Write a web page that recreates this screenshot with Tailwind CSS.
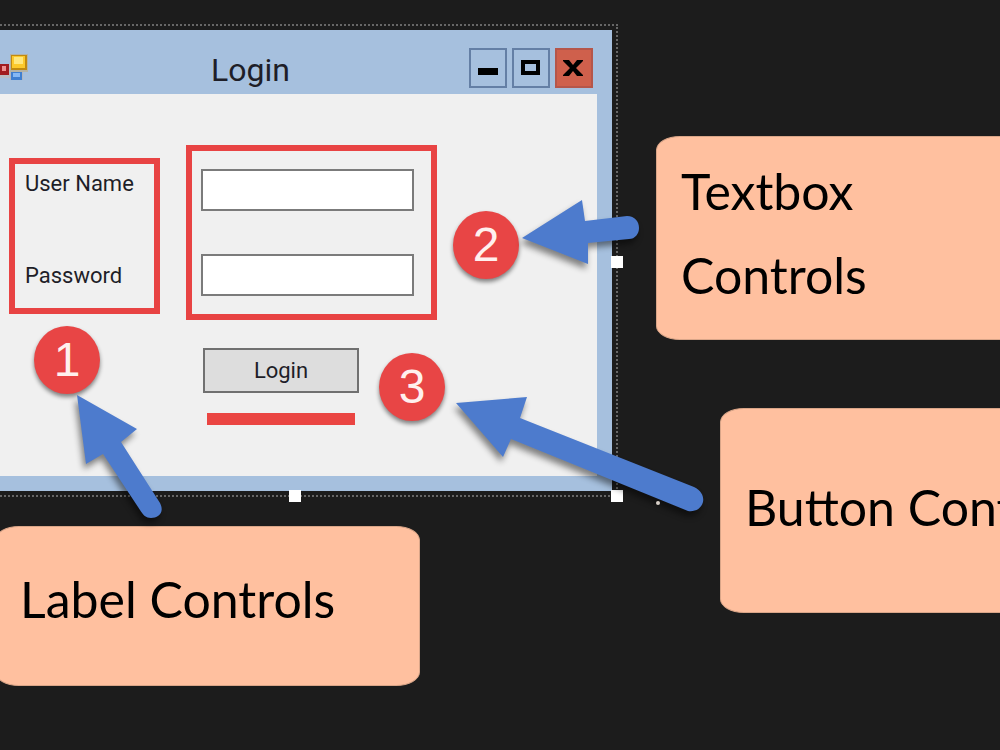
<!DOCTYPE html>
<html lang="en">
<head>
  <meta charset="UTF-8" />
  <meta name="viewport" content="width=device-width, initial-scale=1.0" />
  <title>Login form controls</title>
  <script src="https://cdn.jsdelivr.net/npm/@tailwindcss/browser@4"></script>
</head>
<body class="bg-[#1c1c1c]">
  <main class="relative min-h-screen overflow-hidden pt-6 font-['Roboto',sans-serif] text-[#1e1e28]">

    <!-- Form in the designer, with its dotted selection frame -->
    <section class="relative w-[618px] border-y-2 border-r-2 border-dotted border-[#666] py-1 pr-1">
      <div class="bg-[#a6c0de] pr-[15px] pb-[15px]">
        <header class="flex h-16 items-center pt-3">
          <svg class="mb-2 h-8 w-8 shrink-0" viewBox="0 0 32 32" aria-hidden="true">
            <rect x="-4" y="16" width="14" height="14" fill="#b9bdc4" />
            <rect x="10" y="6" width="18" height="18" fill="#b5b3a5" />
            <rect x="10" y="24" width="13" height="10" fill="#b3b6bd" />
            <rect x="-3" y="16" width="12" height="11" fill="#a11c20" />
            <rect x="2" y="18" width="4" height="5" fill="#ee8f8f" />
            <rect x="11" y="7" width="16" height="15" fill="#c18a10" />
            <rect x="12" y="8" width="13" height="12" fill="#fcc92b" />
            <rect x="14" y="9" width="9" height="7" fill="#ffe77d" />
            <rect x="11" y="24" width="11" height="8" fill="#3f7fd0" />
            <rect x="13" y="25" width="7" height="4" fill="#85b8f4" />
          </svg>
          <h1 class="flex-1 pt-1 text-center text-[32px] leading-10">Login</h1>
          <div class="mr-1 flex gap-[5px]">
            <button type="button" aria-label="Minimize" class="h-10 w-[38px] border-2 border-[#647fa5]">
              <svg class="h-full w-full" viewBox="0 0 34 36"><rect x="7" y="18" width="20" height="7" /></svg>
            </button>
            <button type="button" aria-label="Maximize" class="h-10 w-[38px] border-2 border-[#647fa5]">
              <svg class="h-full w-full" viewBox="0 0 34 36"><rect x="9" y="12" width="15" height="11" fill="none" stroke="#000" stroke-width="4" /></svg>
            </button>
            <button type="button" aria-label="Close" class="h-10 w-[38px] border-2 border-[#b5564a] bg-[#cf604c]">
              <svg class="h-full w-full" viewBox="0 0 34 36"><path d="M6 10h6l4 5 4-5h6v1l-7 7 7 7v1h-6l-4-5-4 5H6v-1l7-7-7-7z" /></svg>
            </button>
          </div>
        </header>

        <form class="h-[382px] bg-[#f0f0f0] pt-[51px] text-[22px] leading-8">
          <div class="flex items-start gap-[26px] pl-[9px]">
            <div class="mt-[13px] flex h-[156px] w-[151px] flex-col gap-[60px] border-6 border-[#e84343] pt-1 pl-[10px]">
              <label for="username" class="whitespace-nowrap">User Name</label>
              <label for="password">Password</label>
            </div>
            <div class="flex h-[175px] w-[251px] flex-col gap-[43px] border-6 border-[#e84343] pt-[18px] pl-[9px]">
              <input id="username" type="text" class="h-[42px] w-[213px] border-2 border-[#7b7b7b] bg-white px-2" />
              <input id="password" type="password" class="h-[42px] w-[213px] border-2 border-[#7b7b7b] bg-white px-2" />
            </div>
          </div>
          <div class="mt-7 ml-[203px] w-[156px]">
            <button type="submit" class="h-[45px] w-full border-2 border-[#707070] bg-[#dddddd]">Login</button>
            <div class="mx-auto mt-5 h-3 w-[148px] bg-[#ea4542]"></div>
          </div>
        </form>
      </div>

      <!-- Resize handles -->
      <span class="absolute -right-[7px] top-[230px] size-3 bg-white"></span>
      <span class="absolute -bottom-[7px] left-[289px] size-3 bg-white"></span>
      <span class="absolute -right-[7px] -bottom-[7px] size-3 bg-white"></span>
    </section>

    <!-- Callouts -->
    <div class="absolute top-[136px] left-[656px] h-[204px] w-[420px] rounded-[24px/14px] border border-[#d9a588] bg-[#ffc09f] pt-3 pl-6 font-['Lato',sans-serif] text-[50px] leading-[84px] text-black">
      <p class="w-[240px]">Textbox Controls</p>
    </div>
    <div class="absolute top-[408px] left-[720px] h-[205px] w-[420px] rounded-[24px/14px] border border-[#d9a588] bg-[#ffc09f] pt-14 pl-6 font-['Lato',sans-serif] text-[50px] leading-[84px] text-black">
      <p class="whitespace-nowrap">Button Controls</p>
    </div>
    <div class="absolute top-[526px] -left-[5px] h-[160px] w-[425px] rounded-[24px/14px] border border-[#d9a588] bg-[#ffc09f] pt-[30px] pl-6 font-['Lato',sans-serif] text-[50px] leading-[84px] text-black">
      <p class="whitespace-nowrap">Label Controls</p>
    </div>

    <!-- Numbers -->
    <span class="absolute top-[326px] left-[34px] flex h-[68px] w-[66px] items-center justify-center rounded-[50%] bg-[#e84545] font-['Liberation_Sans',sans-serif] text-5xl text-[#fff0ee] shadow-[0_3px_4px_#0007]">1</span>
    <span class="absolute top-[211px] left-[453px] flex h-[68px] w-[66px] items-center justify-center rounded-[50%] bg-[#e84545] font-['Liberation_Sans',sans-serif] text-5xl text-[#fff0ee] shadow-[0_3px_4px_#0007]">2</span>
    <span class="absolute top-[353px] left-[379px] flex h-[68px] w-[66px] items-center justify-center rounded-[50%] bg-[#e84545] font-['Liberation_Sans',sans-serif] text-5xl text-[#fff0ee] shadow-[0_3px_4px_#0007]">3</span>

    <!-- Arrows -->
    <svg class="pointer-events-none absolute top-0 left-0 h-[750px] w-[1000px] drop-shadow-[-2px_5px_3px_#0007]" viewBox="0 0 1000 750" fill="#4d7bcd" aria-hidden="true">
      <path d="M77 395L137 429L121 442L160 503C165 513 158 518 151 518C146 518 143 515 140 510L103 454L86 464Z" />
      <path d="M522 238L582 200L585 221L627 216C635 216 639 222 639 228C639 234 635 239 629 239L588 243L588 264Z" />
      <path d="M456 403L527 397L520 418L694 487C702 491 704 497 703 502C701 509 695 512 688 511L511 439L503 457Z" />
    </svg>
    <span class="absolute top-[501px] left-[656px] size-1 rounded-sm bg-[#d8d0c8]"></span>
  </main>
</body>
</html>
